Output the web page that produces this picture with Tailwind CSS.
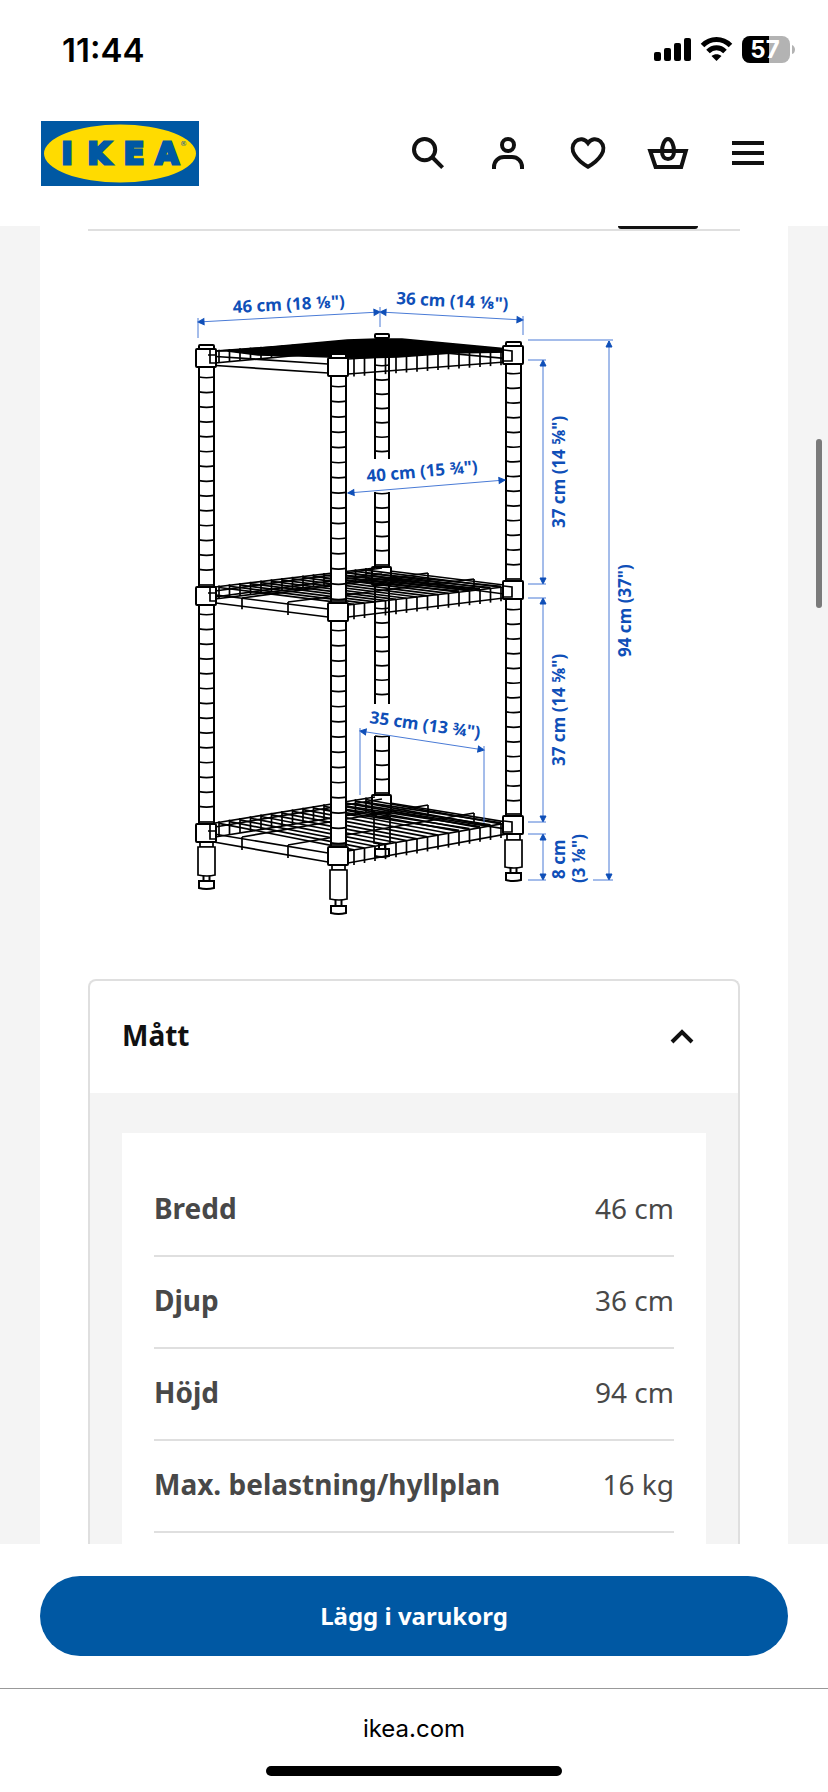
<!DOCTYPE html>
<html lang="sv">

<head>
    <meta charset="UTF-8">
    <meta name="viewport" content="width=device-width, initial-scale=1.0">
    <title>Mått - IKEA</title>
    <script src="https://cdn.jsdelivr.net/npm/@tailwindcss/browser@4"></script>
</head>

<body class="bg-white font-['Noto_Sans',sans-serif] text-[#111111]">
    <div class="relative flex flex-col h-screen overflow-hidden">

        <!-- status bar -->
        <div class="flex flex-row shrink-0 items-center justify-between h-[100px] pl-[62px] pr-8 font-['Inter',sans-serif] text-black">
            <span class="text-[33px] leading-none font-semibold">11:44</span>
            <svg class="w-[144px] h-8" viewBox="651 34 144 32" role="img" aria-label="Batteri 57 %">
                <rect x="653" y="52" width="7" height="9" rx="2" />
                <rect x="663" y="48" width="7" height="13" rx="2" />
                <rect x="673" y="43" width="7" height="18" rx="2" />
                <rect x="683" y="38" width="7" height="23" rx="2" />
                <g fill="none" stroke="#000" stroke-width="5">
                    <path d="M701.5 45.5C709.500 37.500 721.500 37.500 729.500 45.500" />
                    <path d="M707 51.500C712 46.500 719 46.500 724 51.500" />
                </g>
                <path d="M715.500 61l-5-5c3-2.500 7-2.500 10 0z" />
                <rect x="741" y="36" width="48" height="27" rx="8" fill="#b3b3b3" />
                <path d="M749 36h19v27h-19a8 8 0 0 1-8-8V44a8 8 0 0 1 8-8z" />
                <path d="M791 45c4 1.500 4 8 0 9z" fill="#b3b3b3" />
                <text x="764" y="58" text-anchor="middle" font-size="24" font-weight="700" fill="#fff">57</text>
            </svg>
        </div>

        <header class="flex flex-row shrink-0 items-center justify-between h-[126px] pb-5 pl-[41px] pr-10">
            <a href="#" aria-label="IKEA">
                <svg class="w-[158px] h-[65px]" viewBox="0 0 158 65">
                    <rect width="158" height="65" fill="#0058a3" />
                    <ellipse cx="79" cy="32.500" rx="76" ry="29" fill="#ffdb00" />
                    <text x="26 58 93 126" y="43" text-anchor="middle" font-family="DejaVu Sans" font-weight="700" font-size="30" fill="#0058a3" stroke="#0058a3" stroke-width="3">IKEA</text>
                    <text x="139" y="25" font-family="DejaVu Sans" font-size="7" fill="#0058a3">®</text>
                </svg>
            </a>
            <nav class="flex flex-row *:flex *:size-20 *:items-center *:justify-center">
                <button aria-label="Sök">
                    <svg class="size-12" viewBox="0 0 24 24" fill="none" stroke="currentColor" stroke-width="2">
                        <circle cx="10.300" cy="10.300" r="5.300" />
                        <path d="m14 14 5.300 5.300" />
                    </svg>
                </button>
                <button aria-label="Profil">
                    <svg class="size-12" viewBox="0 0 24 24" fill="none" stroke="currentColor" stroke-width="2">
                        <circle cx="12" cy="8" r="3" />
                        <path d="M5 20v-1c0-2.800 2.200-5 5-5h4c2.800 0 5 2.200 5 5v1" />
                    </svg>
                </button>
                <button aria-label="Favoriter">
                    <svg class="size-12" viewBox="0 0 24 24" fill="none" stroke="currentColor" stroke-width="2">
                        <path d="M12 7C10.400 4.700 7.600 4.500 5.800 6.200 4 8 3.900 10.700 5.300 12.900 6.800 15.300 9 17.200 12 18.900c3-1.700 5.200-3.600 6.700-6 1.400-2.200 1.300-4.900-.5-6.700C16.400 4.500 13.600 4.700 12 7Z" />
                    </svg>
                </button>
                <button aria-label="Varukorg">
                    <svg class="size-12" viewBox="0 0 24 24" fill="none" stroke="currentColor" stroke-width="2">
                        <path d="M3.100 11h17.800l-2.300 8H5.800z" />
                        <path d="M12 5c-1.800 0-3 3.200-3 6.200C9 13.500 10.200 15 12 15s3-1.500 3-3.800C15 8.200 13.800 5 12 5Z" />
                    </svg>
                </button>
                <button aria-label="Meny">
                    <svg class="size-12" viewBox="0 0 24 24" fill="none" stroke="currentColor" stroke-width="2">
                        <path d="M4 7h16M4 12h16M4 17h16" />
                    </svg>
                </button>
            </nav>
        </header>

        <main class="flex-1 min-h-0 overflow-hidden bg-[#f4f4f4] px-10">
            <div class="bg-white px-12">
                <!-- bottom edge of the tab row -->
                <div class="flex flex-row justify-end h-[5px] border-b-2 border-[#dfdfdf] pr-[42px]">
                    <div class="w-20 h-[3px] rounded-b-sm bg-[#111111]"></div>
                </div>

                <svg id="drawing" class="w-full my-10" viewBox="88 271 652 668" fill="none" stroke="#000" stroke-width="1.700" role="img" aria-label="Hylla med mått">
                    <g id="shelves"></g>
                    <g id="posts"></g>
                    <g id="dimensions" stroke="#4a7bd6" stroke-width="1"></g>
                    <g fill="#0f4fb8" stroke="none" font-size="17" font-weight="700">
                        <text transform="translate(233 313) rotate(-3)">46 cm (18 ⅛")</text>
                        <text transform="translate(396 304) rotate(3)">36 cm (14 ⅛")</text>
                        <text transform="translate(367 482) rotate(-5)">40 cm (15 ¾")</text>
                        <text transform="translate(369 723) rotate(8)">35 cm (13 ¾")</text>
                        <text transform="translate(565 528) rotate(-90)">37 cm (14 ⅝")</text>
                        <text transform="translate(565 766) rotate(-90)">37 cm (14 ⅝")</text>
                        <text transform="translate(631 657) rotate(-90)">94 cm (37")</text>
                        <text transform="translate(565 879) rotate(-90)">8 cm</text>
                        <text transform="translate(585 883) rotate(-90)">(3 ⅛")</text>
                    </g>
                </svg>

                <section class="border-2 border-b-0 border-[#dfdfdf] rounded-t-lg">
                    <button aria-expanded="true" aria-controls="measurements" class="flex flex-row w-full h-28 items-center justify-between px-8">
                        <span class="pb-1 text-[28px] font-bold">Mått</span>
                        <svg class="size-12" viewBox="0 0 24 24" fill="none" stroke="currentColor" stroke-width="2">
                            <path d="m7 14.500 5-5 5 5" />
                        </svg>
                    </button>
                    <div id="measurements" class="bg-[#f4f4f4] px-8 pt-10">
                        <div class="bg-white p-8">
                            <table class="w-full border-separate border-spacing-0 text-[28px] leading-9 text-[#484848]">
                                <tbody class="*:*:h-[92px] *:*:border-b-2 *:*:border-[#dfdfdf] *:*:pb-1">
                                    <tr>
                                        <th class="text-left font-bold">Bredd</th>
                                        <td class="text-right">46 cm</td>
                                    </tr>
                                    <tr>
                                        <th class="text-left font-bold">Djup</th>
                                        <td class="text-right">36 cm</td>
                                    </tr>
                                    <tr>
                                        <th class="text-left font-bold">Höjd</th>
                                        <td class="text-right">94 cm</td>
                                    </tr>
                                    <tr>
                                        <th class="text-left font-bold">Max. belastning/hyllplan</th>
                                        <td class="text-right">16 kg</td>
                                    </tr>
                                </tbody>
                            </table>
                        </div>
                    </div>
                </section>
            </div>
        </main>

        <div class="shrink-0 px-10 py-8">
            <button class="w-full h-20 rounded-full bg-[#0058a3] text-white text-[24px] font-bold">Lägg i varukorg</button>
        </div>

        <footer class="flex flex-col shrink-0 items-center justify-between h-[104px] border-t border-[#999999] pt-6 pb-4 font-['Inter',sans-serif] text-black">
            <span class="text-[24px] leading-8">ikea.com</span>
            <div class="w-[296px] h-[10px] rounded-full bg-black"></div>
        </footer>

        <!-- scroll indicator -->
        <div class="absolute right-[6px] top-[439px] w-[6px] h-[169px] rounded-full bg-[#7a7a7a]"></div>
    </div>

    <script>
        const _shelves = document.getElementById("shelves");
        const _posts = document.getElementById("posts");
        const _dimensions = document.getElementById("dimensions");

        function add(parent, tag, attrs) {
            const e = document.createElementNS("http://www.w3.org/2000/svg", tag);
            for (const k in attrs) e.setAttribute(k, attrs[k]);
            parent.appendChild(e);
        }

        const line = (parent, x1, y1, x2, y2) => add(parent, "path", { d: `M${x1} ${y1}L${x2} ${y2}` });
        const at = (l, x) => l[1] + (l[3] - l[1]) * (x - l[0]) / (l[2] - l[0]);

        // every rail is [x1, y1, x2, y2], upper and lower wire
        const SHELVES = [
            {
                front: [[208, 356, 328, 364], [208, 365, 328, 373]],
                side: [[348, 359, 505, 349], [348, 374, 505, 362]],
                back: [[215, 351, 375, 340], [215, 363, 375, 348]],
                right: [[390, 341, 512, 350], [390, 348, 512, 359]],
                rods: [],
            },
            {
                front: [[208, 594, 328, 609], [208, 602, 328, 617]],
                side: [[348, 605, 512, 586], [348, 617, 512, 597]],
                back: [[215, 587, 375, 568], [215, 599, 375, 579]],
                right: [[390, 571, 512, 586], [390, 579, 512, 595]],
                rods: [[242, 598, 428, 573], [288, 602, 474, 579], [215, 591, 382, 568], [215, 597, 382, 574]],
            },
            {
                front: [[208, 833, 328, 853], [208, 841, 328, 862]],
                side: [[348, 851, 512, 822], [348, 863, 512, 833]],
                back: [[215, 823, 375, 797], [215, 837, 375, 811]],
                right: [[390, 803, 512, 823], [390, 811, 512, 830]],
                rods: [[242, 837, 428, 805], [288, 845, 474, 813], [215, 827, 382, 799]],
            },
        ];

        SHELVES.forEach((s, n) => {
            [s.front, s.side, s.back, s.right].flat().forEach(l => line(_shelves, ...l));
            for (let i = 0; i < 15; i++) {
                const l = 219 + i * 10.5, r = 354 + i * 10.5;
                line(_shelves, l, at(s.back[0], l) - 1, l, at(s.back[1], l));
                line(_shelves, r, at(s.side[0], r), r, at(s.side[1], r) + 3);
                if (n) line(_shelves, l, at(s.back[0], l) + 1, r, at(s.side[0], r));
                // wires in the far half lie closer together
                if (n && i > 9) line(_shelves, l, at(s.back[0], l) + 4, r, at(s.side[0], r) - 1);
            }
            s.rods.forEach((l, i) => {
                line(_shelves, ...l);
                if (i > 1) return;
                line(_shelves, l[0], l[1], l[0], at(s.front[1], l[0]) + 3);
                line(_shelves, l[2], l[3], l[2], l[3] + 10);
            });
        });

        // the top shelf is seen edge-on, its wires run together
        add(_shelves, "path", {
            fill: "#000",
            d: "M217 351l20-1 22-2 22-2 22-2 22-2 22-2 30-1h25l106 10v3l-55 1-55 4-40 1-58-2-42-1-31-4Z",
        });

        const POSTS = [
            { x: 375, w: 14, caps: [334], clamps: [567, 795], parts: [[345, 459, 365], [492, 567, 493], [585, 704, 608], [736, 795, 736]], step: 14.3, foot: [812, 817, 844, 857], thin: true },
            { x: 199, w: 15, caps: [345], clamps: [349, 587, 824], parts: [[367, 587, 377], [604, 824, 614]], step: 14.8, foot: [842, 847, 876, 889] },
            { x: 506, w: 15, caps: [342], clamps: [346, 581, 816], parts: [[364, 581, 373], [599, 816, 609]], step: 14.7, foot: [834, 840, 868, 881] },
            { x: 331, w: 15, caps: [354], clamps: [358, 603, 847], parts: [[376, 603, 386], [620, 847, 630]], step: 15.2, foot: [865, 870, 900, 914] },
        ];

        POSTS.forEach(p => {
            const fill = p.thin ? "none" : "#fff";
            const r = p.x + p.w;
            p.parts.forEach(([top, bottom, first]) => {
                add(_posts, "path", { d: `M${p.x} ${top}H${r}V${bottom}H${p.x}Z`, fill, stroke: "none" });
                add(_posts, "path", { d: `M${p.x} ${top}V${bottom}M${r} ${top}V${bottom}`, "stroke-width": 2 });
                for (let y = first; y < bottom - 3; y += p.step)
                    add(_posts, "path", { d: `M${p.x} ${y}q${p.w / 2} 1.500 ${p.w} 0` });
            });
            const [a, b, c, d] = p.foot;
            const m = p.x + p.w / 2;
            add(_posts, "path", { d: `M${p.x + 1} ${a}V${b}H${r - 1}V${a}`, fill });
            add(_posts, "path", { d: `M${p.x - 1} ${b}H${r + 1}V${c - 1}q-${p.w / 2} 2-${p.w + 2} 0Z`, fill });
            add(_posts, "path", { d: `M${m - 3} ${c}V${d - 8}M${m + 3} ${c}V${d - 8}`, "stroke-width": 2 });
            add(_posts, "path", { d: `M${p.x} ${d - 8}H${r}V${d - 1}q-${p.w / 2} 2-${p.w} 0Z`, fill, "stroke-width": 2 });
            p.clamps.forEach(y => {
                add(_posts, "rect", { x: p.x - 3, y, width: p.w + 5, height: 18, rx: 1, fill, "stroke-width": 2 });
                line(_posts, p.x, y - 2, r, y - 2);
            });
            p.caps.forEach(y => add(_posts, "rect", { x: p.x, y, width: p.w, height: 4, rx: 1, fill: "#fff", "stroke-width": 2 }));
        });
        // wire hooks on the outer clamps
        [[355, 351], [593, 587], [831, 822]].forEach(([l, r]) => {
            add(_posts, "path", { d: `M208 ${l}h8M210 ${l - 6}v14h6M504 ${r - 1}l8 1v10h-8` });
        });

        function arrow(x, y, deg) {
            add(_dimensions, "path", { d: "M0 0l-6-3v6z", fill: "#0f4fb8", stroke: "#0f4fb8", transform: `translate(${x} ${y}) rotate(${deg})` });
        }

        [
            [198, 322, 380, 312], [380, 312, 523, 320], [348, 493, 505, 480], [360, 731, 484, 750],
            [543, 360, 543, 584], [543, 598, 543, 822], [543, 834, 543, 880], [609, 341, 609, 880],
        ].forEach(([x1, y1, x2, y2]) => {
            const deg = Math.atan2(y2 - y1, x2 - x1) * 180 / Math.PI;
            line(_dimensions, x1, y1, x2, y2);
            arrow(x1, y1, deg + 180);
            arrow(x2, y2, deg);
        });

        [
            [198, 318, 198, 338], [380, 307, 380, 327], [523, 316, 523, 335], [360, 728, 360, 795], [484, 746, 484, 823],
            [528, 340, 613, 340], [528, 360, 546, 360], [528, 584, 546, 584], [528, 598, 546, 598],
            [528, 822, 546, 822], [528, 834, 546, 834], [528, 880, 546, 880], [593, 880, 613, 880],
        ].forEach(l => line(_dimensions, ...l));
    </script>
</body>

</html>
